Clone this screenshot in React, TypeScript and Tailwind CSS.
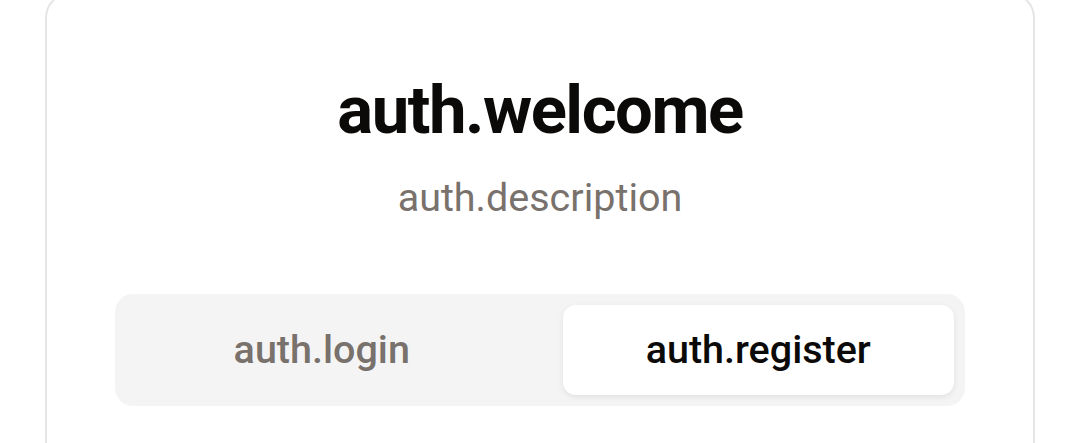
import { useState } from "react";

const tabs = [
  { id: "login", label: "auth.login" },
  { id: "register", label: "auth.register" },
];

export default function App() {
  const [active, setActive] = useState("register");

  return (
    <div className="min-h-screen w-full bg-white font-['Roboto',sans-serif] overflow-hidden">
      <div className="mx-[45px] -mt-2 rounded-[26px] border-2 border-[#e7e5e4] bg-white px-[68px] pt-[76px] pb-20">
        {/* Header */}
        <div className="flex flex-col items-center">
          <h1 className="text-[67px] leading-[80px] font-bold tracking-[-0.022em] text-[#0c0a09]">
            auth.welcome
          </h1>
          <p className="mt-[18px] text-[39.5px] leading-[60px] text-[#78716c]">
            auth.description
          </p>
        </div>

        {/* Tabs */}
        <div className="mt-[66px] grid grid-cols-2 gap-[45px] rounded-[18px] bg-[#f4f4f4] p-[11px]">
          {tabs.map((tab) => (
            <button
              key={tab.id}
              onClick={() => setActive(tab.id)}
              className={
                active === tab.id
                  ? "h-[90px] rounded-[13px] bg-white text-[39.5px] font-medium text-[#0c0a09] shadow-[0_2px_6px_rgba(0,0,0,0.08)]"
                  : "h-[90px] rounded-[13px] text-[39.5px] font-medium text-[#78716c]"
              }
            >
              {tab.label}
            </button>
          ))}
        </div>
      </div>
    </div>
  );
}
